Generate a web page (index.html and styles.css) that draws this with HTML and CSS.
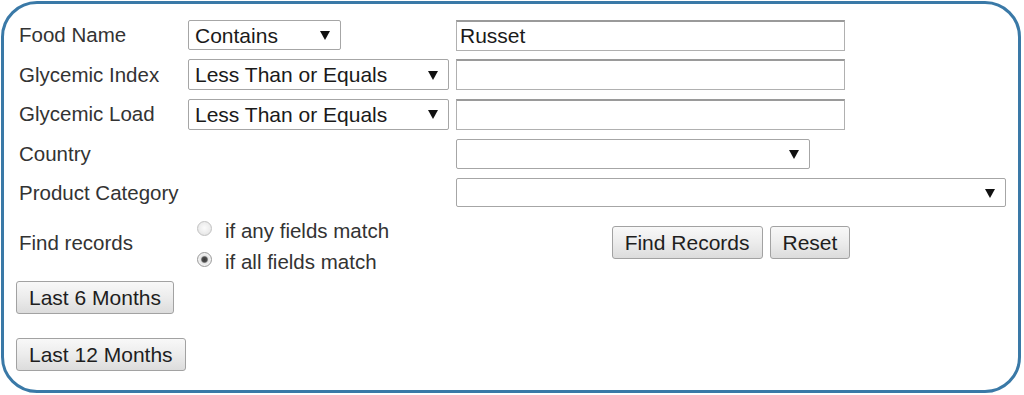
FILE: index.html
```html
<!DOCTYPE html>
<html lang="en">
<head>
<meta charset="utf-8">
<title>Food Search</title>
<link rel="stylesheet" href="styles.css">
</head>
<body>
<div class="panel">
  <form class="form-grid">
    <div class="label">Food Name</div>
    <div class="cell"><span class="select-wrap w-op1"><select class="sel"><option>Contains</option></select></span></div>
    <div class="cell"><input class="text" type="text" value="Russet"></div>

    <div class="label">Glycemic Index</div>
    <div class="cell"><span class="select-wrap w-op2"><select class="sel"><option>Less Than or Equals</option></select></span></div>
    <div class="cell"><input class="text" type="text" value=""></div>

    <div class="label">Glycemic Load</div>
    <div class="cell"><span class="select-wrap w-op2"><select class="sel"><option>Less Than or Equals</option></select></span></div>
    <div class="cell"><input class="text" type="text" value=""></div>

    <div class="label">Country</div>
    <div class="cell"></div>
    <div class="cell"><span class="select-wrap w-country"><select class="sel"><option></option></select></span></div>

    <div class="label">Product Category</div>
    <div class="cell"></div>
    <div class="cell"><span class="select-wrap w-product short"><select class="sel"><option></option></select></span></div>

    <div class="label find-label">Find records</div>
    <div class="radios">
      <label class="radio-line"><span class="radio"></span><span>if any fields match</span></label>
      <label class="radio-line"><span class="radio checked"></span><span>if all fields match</span></label>
    </div>
    <div class="actions">
      <button type="button" class="btn">Find Records</button>
      <button type="button" class="btn">Reset</button>
    </div>
  </form>
  <div class="quick">
    <button type="button" class="btn">Last 6 Months</button>
    <button type="button" class="btn">Last 12 Months</button>
  </div>
</div>
</body>
</html>
```
FILE: styles.css
```css
* { box-sizing: border-box; }

html, body {
  margin: 0;
  padding: 0;
  background: #ffffff;
}

body {
  font-family: "Liberation Sans", Arial, sans-serif;
  color: #333333;
}

.panel {
  margin: 1px;
  width: 1020px;
  height: 392px;
  border: 3px solid #3a79a7;
  border-radius: 36px;
  padding: 16px 12px 0 12px;
  background: #ffffff;
}

.form-grid {
  margin: 0 0 0 3px;
  display: grid;
  grid-template-columns: 169px 268px 550px;
  grid-template-rows: repeat(4, 30px) 29px auto;
  row-gap: 9.5px;
}

.label {
  font-size: 20.5px;
  line-height: 30px;
  color: #333333;
  white-space: nowrap;
  align-self: center;
}

.cell {
  display: flex;
  align-items: center;
}

.select-wrap {
  position: relative;
  display: inline-block;
  height: 30px;
}

.select-wrap.short { height: 29px; }

.w-op1 { width: 153px; }
.w-op2 { width: 261px; height: 31px; }
.w-country { width: 354px; }
.w-product { width: 550px; }

.select-wrap::after {
  content: "";
  position: absolute;
  right: 11px;
  top: 50%;
  margin-top: -4px;
  border-left: 5px solid transparent;
  border-right: 5px solid transparent;
  border-top: 9px solid #111111;
  pointer-events: none;
}

.sel {
  -webkit-appearance: none;
  appearance: none;
  width: 100%;
  height: 100%;
  margin: 0;
  border: 1px solid #a6a6a6;
  border-radius: 2px;
  background: #ffffff;
  padding: 0 24px 0 6px;
  font-family: "Liberation Sans", Arial, sans-serif;
  font-size: 21px;
  color: #1a1a1a;
  outline: none;
}

.text {
  width: 389px;
  height: 31px;
  margin: 0;
  border: 1px solid #b0b0b0;
  border-top: 2px solid #9a9a9a;
  border-radius: 0;
  padding: 0 3px;
  font-family: "Liberation Sans", Arial, sans-serif;
  font-size: 21px;
  color: #1a1a1a;
  background: #ffffff;
  outline: none;
}

.find-label {
  align-self: start;
  margin-top: 10px;
  line-height: 31px;
}

.radios {
  display: flex;
  flex-direction: column;
  margin-top: -1.5px;
  padding-left: 9px;
}

.radio-line {
  display: flex;
  align-items: center;
  height: 31.5px;
  font-size: 20.5px;
  color: #333333;
  gap: 13px;
}

.radio {
  display: block;
  width: 15px;
  height: 15px;
  margin: 0 0 5px 0;
  border-radius: 50%;
  border: 1px solid #c2c2c2;
  background: radial-gradient(circle at 50% 45%, #fbfbfb 0%, #ededed 55%, #d9d9d9 100%);
  flex: none;
}

.radio.checked {
  border-color: #9a9a9a;
  background: radial-gradient(circle, #3a3a3a 0%, #4e4e4e 28%, #e4e4e4 42%, #f2f2f2 65%, #d2d2d2 100%);
}

.actions {
  align-self: start;
  margin-top: 9.5px;
  display: flex;
  justify-content: center;
  gap: 7px;
}

.btn {
  height: 33px;
  margin: 0;
  padding: 0 12px;
  border: 1px solid #a2a2a2;
  border-radius: 3px;
  background: linear-gradient(to bottom, #f8f8f8 0%, #ececec 50%, #dcdcdc 100%);
  font-family: "Liberation Sans", Arial, sans-serif;
  font-size: 21px;
  color: #1e1e1e;
  white-space: nowrap;
}

.quick {
  margin-top: 3px;
  display: flex;
  flex-direction: column;
  align-items: flex-start;
  gap: 24px;
}
```
